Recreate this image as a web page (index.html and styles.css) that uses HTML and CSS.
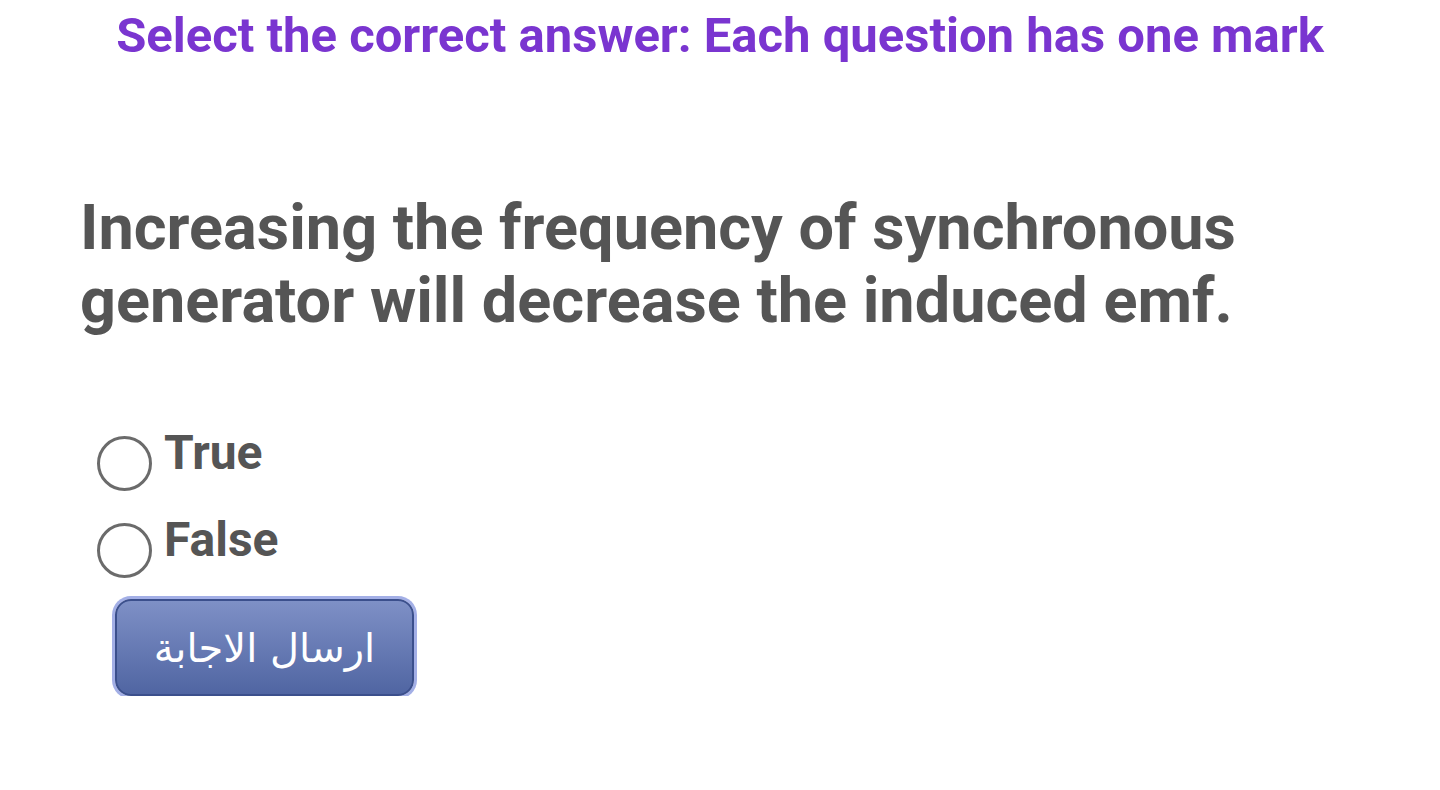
FILE: index.html
```html
<!DOCTYPE html>
<html lang="en">
  <head>
    <meta charset="UTF-8" />
    <meta name="viewport" content="width=device-width, initial-scale=1.0" />
    <title>Quiz</title>
    <link rel="stylesheet" href="styles.css">
  </head>
  <body>
    <h1 class="title">Select the correct answer: Each question has one mark</h1>

    <div class="question">
      <p class="question-text">Increasing the frequency of synchronous generator will decrease the induced emf.</p>

      <div class="options">
        <label class="option">
          <input type="radio" name="answer" value="true" />
          <span>True</span>
        </label>
        <label class="option">
          <input type="radio" name="answer" value="false" />
          <span>False</span>
        </label>
      </div>

      <button class="submit" dir="rtl">ارسال الاجابة</button>
    </div>
  </body>
</html>
```

FILE: styles.css
```css
body {
  margin: 0;
  font-family: Roboto, "Liberation Sans", sans-serif;
  background: #fff;
  color: #555;
}
.title {
  margin: 0;
  padding-top: 8px;
  text-align: center;
  font-size: 49px;
  font-weight: bold;
  line-height: 56px;
  color: #7a35d0;
}
.question {
  padding: 0 80px;
}
.question-text {
  margin: 127px 0 0;
  max-width: 1200px;
  font-size: 63px;
  font-weight: bold;
  line-height: 73px;
  color: #555;
}
.options {
  margin-top: 95px;
  padding-left: 17px;
  display: flex;
  flex-direction: column;
  gap: 28px;
}
.option {
  display: flex;
  align-items: flex-start;
  gap: 12px;
  font-size: 48px;
  font-weight: bold;
  line-height: 54px;
}
.option span {
  margin-top: -6px;
}
.option input {
  appearance: none;
  margin: 4px 0 0;
  width: 55px;
  height: 55px;
  border: 3px solid #6b6b6b;
  border-radius: 50%;
  background: #fff;
}
.submit {
  display: block;
  margin: 21px 0 0 35px;
  width: 299px;
  height: 97px;
  border: 2px solid #3b4f8c;
  border-radius: 16px;
  box-shadow: 0 0 0 3px #a3afe6;
  background: linear-gradient(#7e90c6, #5065a2);
  color: #fff;
  font-family: "DejaVu Sans", sans-serif;
  font-size: 40px;
}
```
